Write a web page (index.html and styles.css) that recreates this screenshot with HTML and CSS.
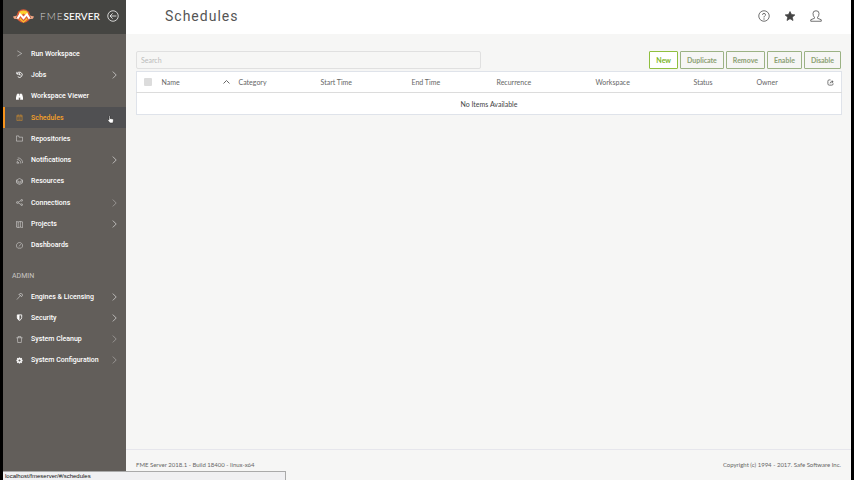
FILE: index.html
```html
<!DOCTYPE html>
<html lang="en">
<head>
    <meta charset="UTF-8">
    <meta name="viewport" content="width=device-width, initial-scale=1.0">
    <title>FME Server - Schedules</title>
    <link rel="stylesheet" href="styles.css">
</head>
<body>

    <aside class="sidebar">
        <div class="brand">
            <svg class="logo" viewBox="0 0 40 30">
                <circle cx="20" cy="15" r="13" fill="#dd5a38"/>
                <path d="M11 9a11 11 0 0 1 18 0l-3 6-6-5-6 5z" fill="#fbd02d"/>
                <path d="M0 16l8-2-2 4 4 3-8-1z" fill="#f0a583"/>
                <path d="M40 16l-8-2 2 4-4 3 8-1z" fill="#f0a583"/>
                <path d="M7 19l6-10 7 7 7-7 6 10-3 2-4-6-6 7-6-7-4 6z" fill="#fff"/>
                <path d="M12 21l2-2 6 6 6-6 2 2-8 7z" fill="#f9c22e"/>
            </svg>
            <span class="brand-name"><span class="brand-light">FME</span><b>SERVER</b></span>
            <button type="button" class="icon-button collapse" aria-label="Collapse menu">
                <svg class="icon" viewBox="0 0 16 16"><circle cx="8" cy="8" r="7"/><path d="M12.500 8H4M7.500 4.500L4 8l3.500 3.500"/></svg>
            </button>
        </div>

        <nav>
            <ul class="menu main-menu">
                <li><a href="#run">
                    <svg class="icon" viewBox="0 0 16 16"><path d="M3 2l10 6-10 6"/></svg>
                    <span>Run Workspace</span></a></li>
                <li><a href="#jobs">
                    <svg class="icon bold" viewBox="0 0 16 16"><path d="M2 2v5h5M2.500 6.500A6 6 0 1 1 4 13M8 5v4h3"/></svg>
                    <span>Jobs</span>
                    <svg class="arrow" viewBox="0 0 8 14"><path d="M1 1l6 6-6 6"/></svg></a></li>
                <li><a href="#viewer">
                    <svg class="icon solid" viewBox="0 0 16 16"><path d="M3 2h4v4h2V2h4l3 8v5h-6v-5H6v5H0v-5z"/></svg>
                    <span>Workspace Viewer</span></a></li>
                <li><a href="#schedules" class="active">
                    <svg class="icon" viewBox="0 0 16 16"><path d="M2 3h12v12H2zM2 6h12M5 1v3M11 1v3M4 9h2M7 9h2M10 9h2M4 12h2M7 12h2M10 12h2"/></svg>
                    <span>Schedules</span></a></li>
                <li><a href="#repositories">
                    <svg class="icon" viewBox="0 0 16 16"><path d="M1 14V2h5l1 3h8v9z"/></svg>
                    <span>Repositories</span></a></li>
                <li><a href="#notifications">
                    <svg class="icon" viewBox="0 0 16 16"><path d="M2 6a8 8 0 0 1 9 9M4 2a11 11 0 0 1 11 12M2 14l1-4 4 4z"/></svg>
                    <span>Notifications</span>
                    <svg class="arrow" viewBox="0 0 8 14"><path d="M1 1l6 6-6 6"/></svg></a></li>
                <li><a href="#resources">
                    <svg class="icon" viewBox="0 0 16 16"><path d="M8 1l7 4-7 4-7-4zM1 8l7 4 7-4M1 11l7 4 7-4M1 5v6M15 5v6"/></svg>
                    <span>Resources</span></a></li>
                <li><a href="#connections">
                    <svg class="icon" viewBox="0 0 16 16"><circle cx="3" cy="8" r="2"/><circle cx="13" cy="3" r="2"/><circle cx="13" cy="13" r="2"/><path d="M5 7l6-3M5 9l6 3"/></svg>
                    <span>Connections</span>
                    <svg class="arrow dim" viewBox="0 0 8 14"><path d="M1 1l6 6-6 6"/></svg></a></li>
                <li><a href="#projects">
                    <svg class="icon" viewBox="0 0 16 16"><path d="M1 1l4 1 5-1 5 1v13l-5-1-5 1-4-1zM5 2v13M10 1v13"/></svg>
                    <span>Projects</span>
                    <svg class="arrow" viewBox="0 0 8 14"><path d="M1 1l6 6-6 6"/></svg></a></li>
                <li><a href="#dashboards">
                    <svg class="icon" viewBox="0 0 16 16"><path d="M4 14a7 7 0 1 1 8 0zM7 10l4-5"/></svg>
                    <span>Dashboards</span></a></li>
            </ul>

            <h2 class="menu-title">ADMIN</h2>

            <ul class="menu admin-menu">
                <li><a href="#engines">
                    <svg class="icon" viewBox="0 0 16 16"><path d="M2 15l7-8M7 3l2-2 5 1 1 4-3 2zM7 3l5 5"/></svg>
                    <span>Engines &amp; Licensing</span>
                    <svg class="arrow" viewBox="0 0 8 14"><path d="M1 1l6 6-6 6"/></svg></a></li>
                <li><a href="#security">
                    <svg class="icon bold" viewBox="0 0 16 16"><path d="M3 2h10v6q0 4-5 7-5-3-5-7z"/><path class="fill" d="M3 2h5v13q-5-3-5-7z"/></svg>
                    <span>Security</span>
                    <svg class="arrow" viewBox="0 0 8 14"><path d="M1 1l6 6-6 6"/></svg></a></li>
                <li><a href="#cleanup">
                    <svg class="icon" viewBox="0 0 16 16"><path d="M1 4h14M5 4V1h6v3M3 4l1 11h8l1-11"/></svg>
                    <span>System Cleanup</span>
                    <svg class="arrow dim" viewBox="0 0 8 14"><path d="M1 1l6 6-6 6"/></svg></a></li>
                <li><a href="#configuration">
                    <svg class="icon gear" viewBox="0 0 16 16"><circle cx="8" cy="8" r="4"/><path d="M8 1v3M8 12v3M1 8h3M12 8h3M3 3l2 2M11 11l2 2M13 3l-2 2M5 11l-2 2"/></svg>
                    <span>System Configuration</span>
                    <svg class="arrow dim" viewBox="0 0 8 14"><path d="M1 1l6 6-6 6"/></svg></a></li>
            </ul>
        </nav>
    </aside>

    <div class="page">
        <header class="topbar">
            <h1>Schedules</h1>
            <div class="top-actions">
                <button type="button" class="icon-button" aria-label="Help">
                    <svg class="icon" viewBox="0 0 16 16"><circle cx="8" cy="8" r="7"/><path d="M6 6.500q0-2 2-2t2 2q0 1-1 1.500T8 10M8 11v2"/></svg>
                </button>
                <button type="button" class="icon-button" aria-label="Favorites">
                    <svg class="icon solid" viewBox="0 0 16 16"><path d="M8 2l2 4 4.500.5-3.500 3 1 4.500-4-2.500L4 14l1-4.500-3.500-3L6 6z"/></svg>
                </button>
                <button type="button" class="icon-button" aria-label="User">
                    <svg class="icon" viewBox="0 0 16 16"><path d="M6 10Q4 8 4 4.500T8 1t4 3.500T10 10v1l5 2v2H1v-2l5-2z"/></svg>
                </button>
            </div>
        </header>

        <main class="content">
            <div class="toolbar">
                <input type="text" class="search" placeholder="Search" aria-label="Search">
                <div class="buttons">
                    <button type="button" class="btn btn-new">New</button>
                    <button type="button" class="btn">Duplicate</button>
                    <button type="button" class="btn">Remove</button>
                    <button type="button" class="btn">Enable</button>
                    <button type="button" class="btn">Disable</button>
                </div>
            </div>

            <table class="schedules">
                <colgroup>
                    <col class="col-check"><col class="col-name"><col class="col-category"><col class="col-start"><col class="col-end">
                    <col class="col-recurrence"><col class="col-workspace"><col class="col-status"><col class="col-owner"><col class="col-reset">
                </colgroup>
                <thead>
                    <tr>
                        <th><input type="checkbox" class="check" aria-label="Select all"></th>
                        <th><div class="sorted">Name <svg class="sort" viewBox="0 0 14 8"><path d="M1 7l6-6 6 6"/></svg></div></th>
                        <th>Category</th>
                        <th>Start Time</th>
                        <th>End Time</th>
                        <th>Recurrence</th>
                        <th>Workspace</th>
                        <th>Status</th>
                        <th>Owner</th>
                        <th>
                            <button type="button" class="icon-button reset" aria-label="Reset columns">
                                <svg class="icon bold" viewBox="0 0 16 16"><path d="M8 2H5Q2 2 2 5v6q0 3 3 3h6q3 0 3-3v-1M7 10q0-4 5-4"/><path class="fill" d="M11 2l4 4-4 4z"/></svg>
                            </button>
                        </th>
                    </tr>
                </thead>
                <tbody>
                    <tr>
                        <td colspan="10">No Items Available</td>
                    </tr>
                </tbody>
            </table>
        </main>

        <footer class="footer">
            <span>FME Server 2018.1 - Build 18400 - linux-x64</span>
            <span>Copyright (c) 1994 - 2017. Safe Software Inc.</span>
        </footer>
    </div>

    <div class="status-bar">localhost/fmeserver/#/schedules</div>

    <svg class="cursor" viewBox="0 0 14 18"><path d="M4 10V2q1-2 2 0v5l6 1q1 0 1 2l-1 6H6l-5-6q1-2 3 0z" fill="#fff" stroke="#222"/></svg>

</body>
</html>
```

FILE: styles.css
```css
* {
    box-sizing: border-box;
}

body {
    margin: 0;
    min-height: 100vh;
    display: flex;
    border-left: 3px solid #000;
    border-right: 3px solid #000;
    background-color: #f6f6f5;
    color: #666;
    font-family: Lato, sans-serif;
    font-size: 7px;
}

svg {
    display: block;
    fill: none;
    stroke: currentColor;
}

.icon {
    width: 7px;
    height: 7px;
    flex: none;
}

.icon.bold {
    stroke-width: 2;
}

.icon.gear {
    stroke-width: 3;
}

.icon.solid,
.icon .fill {
    fill: currentColor;
}

.icon .fill {
    stroke: none;
}

.icon-button {
    padding: 0;
    border: 0;
    background: none;
    color: inherit;
}

/* Sidebar */
.sidebar {
    flex: none;
    width: 123px;
    background-color: #625e5a;
    color: #fff;
    font-family: Roboto, sans-serif;
}

.brand {
    display: flex;
    align-items: center;
    height: 34px;
    padding: 0 7px 2px 10px;
    background-color: #454542;
}

.logo {
    width: 21px;
    height: 16px;
    stroke: none;
}

.brand-name {
    margin-left: 6px;
    font-family: Lato, sans-serif;
    font-size: 10px;
}

.brand-light {
    color: #d0d0ce;
    font-weight: 300;
    letter-spacing: 1px;
}

.brand-name b {
    font-weight: 500;
}

.collapse {
    margin-left: auto;
}

.collapse .icon {
    width: 12px;
    height: 12px;
}

.menu {
    display: flex;
    flex-direction: column;
    margin: 0;
    padding: 0;
    list-style: none;
}

.menu li {
    flex: 1;
    display: flex;
}

.main-menu {
    min-height: 213px;
    margin-top: 9px;
}

.admin-menu {
    min-height: 85px;
}

.menu a {
    flex: 1;
    display: flex;
    align-items: center;
    gap: 8px;
    padding: 0 9px 0 11px;
    border-left: 2px solid transparent;
    color: #fff;
    font-weight: 500;
    text-decoration: none;
}

.menu a.active {
    border-left-color: #f7941e;
    background-color: #505052;
    color: #f7a128;
}

.arrow {
    width: 5px;
    height: 8px;
    margin-left: auto;
}

.arrow.dim {
    opacity: 0.6;
}

.menu-title {
    margin: 0;
    padding: 15px 9px 5px;
    color: #c8c6c4;
    font-size: 7px;
    font-weight: 400;
    line-height: 10px;
}

/* Page */
.page {
    flex: 1;
    display: flex;
    flex-direction: column;
    min-width: 0;
}

.topbar {
    display: flex;
    align-items: center;
    justify-content: space-between;
    height: 34px;
    padding: 0 29px 2px 39px;
    background-color: #fff;
    color: #444;
}

.topbar h1 {
    margin: 0;
    color: #555;
    font-family: Roboto, sans-serif;
    font-size: 14px;
    font-weight: 400;
    letter-spacing: 1px;
}

.top-actions {
    display: flex;
    gap: 14px;
}

.top-actions .icon {
    width: 12px;
    height: 12px;
}

.content {
    flex: 1;
    padding: 17px 10px 0;
}

.toolbar {
    display: flex;
    justify-content: space-between;
    margin-bottom: 2px;
}

.search {
    width: 49%;
    height: 18px;
    padding: 0 4px;
    border: 1px solid #e0e0e0;
    border-radius: 2px;
    background-color: #f6f6f5;
    font: inherit;
}

.search::placeholder {
    color: #bbb;
}

.buttons {
    display: flex;
    gap: 2px;
}

.btn {
    height: 18px;
    padding: 0 6px;
    border: 1px solid #9bb284;
    border-radius: 1px;
    background-color: #f6f6f5;
    color: #8ba072;
    font: inherit;
    font-weight: 700;
}

.btn-new {
    border-color: #8fbf3f;
    background-color: #fff;
    color: #7ab51d;
}

.schedules {
    width: 100%;
    table-layout: fixed;
    border-collapse: collapse;
    border: 1px solid #dfe3ea;
    background-color: #fff;
}

.schedules th,
.schedules td {
    height: 22px;
    padding: 0;
}

.schedules th {
    height: 21px;
    border-bottom: 1px solid #dcdcdc;
    font-weight: 400;
    text-align: left;
}

.schedules td {
    color: #444;
    text-align: center;
}

.col-check { width: 25px; }
.col-name { width: 77px; }
.col-category { width: 82px; }
.col-start { width: 91px; }
.col-end { width: 85px; }
.col-recurrence { width: 99px; }
.col-workspace { width: 98px; }
.col-status { width: 63px; }
.col-owner { width: 70px; }
.col-reset { width: 15px; }

.sorted {
    display: flex;
    align-items: center;
    justify-content: space-between;
    padding-right: 9px;
}

.sort {
    width: 7px;
    height: 4px;
    stroke-width: 2;
}

.check {
    appearance: none;
    display: block;
    width: 8px;
    height: 8px;
    margin: 0 0 0 7px;
    border-radius: 1px;
    background-color: #dcdcdc;
}

.reset {
    display: block;
}

.footer {
    display: flex;
    justify-content: space-between;
    padding: 10px 10px 11px;
    border-top: 1px solid #e6e6ec;
    font-size: 6px;
    line-height: 9px;
}

/* Browser overlays */
.status-bar {
    position: fixed;
    left: 3px;
    bottom: 0;
    width: 283px;
    height: 9px;
    padding-left: 2px;
    border-top: 1px solid #aaa;
    border-right: 1px solid #aaa;
    background-color: #f0f0f2;
    color: #111;
    font-family: "Liberation Sans", sans-serif;
    font-size: 6px;
    line-height: 8px;
}

.cursor {
    position: fixed;
    left: 107px;
    top: 115px;
    width: 7px;
    height: 9px;
}
```
